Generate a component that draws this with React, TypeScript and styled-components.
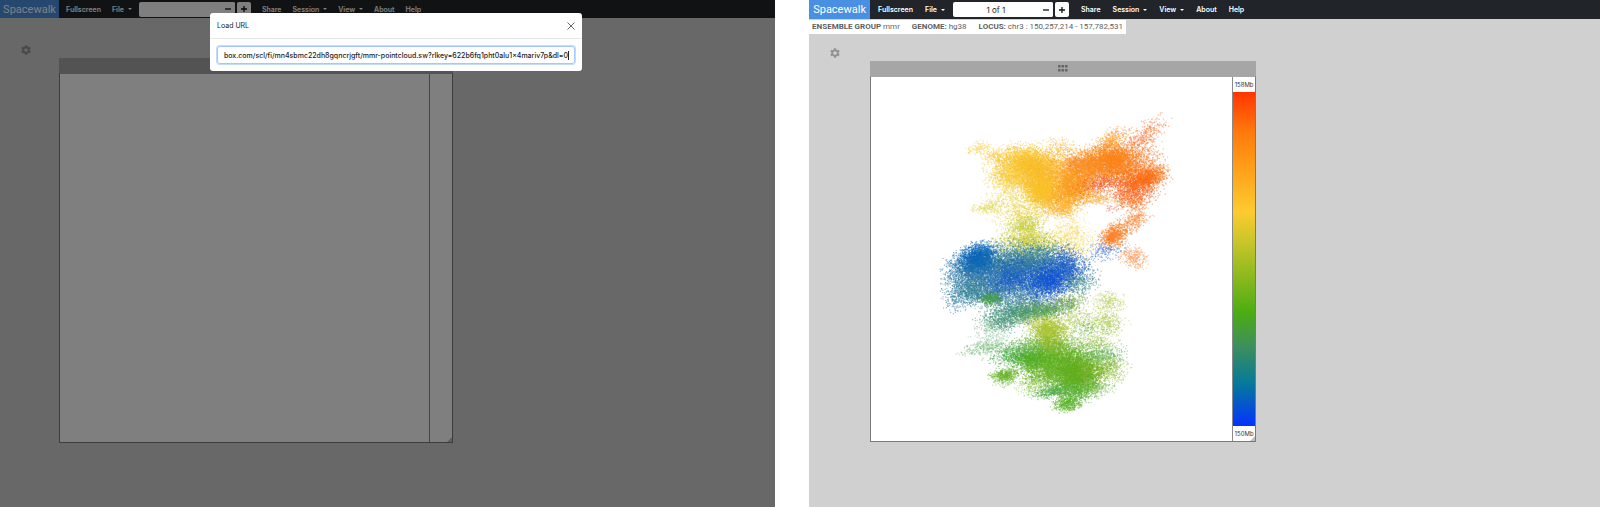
import React from 'react';
import styled, { createGlobalStyle } from 'styled-components';
import { MdSettings } from 'react-icons/md';

const GlobalStyle = createGlobalStyle`
  *, *::before, *::after { box-sizing: border-box; }
  body { margin: 0; background: #fff; font-family: Inter, sans-serif; font-size: 8px; }
  button, input { font: inherit; color: inherit; margin: 0; }
`;

const Page = styled.div`
  display: grid;
  grid-template-columns: 49fr 50fr;
  column-gap: 34px;
  min-height: 100vh;
`;

const Panel = styled.section`
  position: relative;
  min-width: 0;
  background: #d0d0d0;
`;

const Nav = styled.nav<{ $tall?: boolean }>`
  display: flex;
  align-items: center;
  gap: ${p => (p.$tall ? 12 : 11)}px;
  height: ${p => (p.$tall ? 19 : 18)}px;
  background: #212529;
  color: #fff;
  font-size: 7px;
  font-weight: 600;
`;

const Brand = styled.a<{ $tall?: boolean }>`
  display: flex;
  align-items: center;
  justify-content: center;
  align-self: stretch;
  width: ${p => (p.$tall ? 61 : 59)}px;
  margin-right: -4px;
  background: #4a90e2;
  color: #fff;
  font-family: Roboto, sans-serif;
  font-size: 11px;
  font-weight: 400;
  text-decoration: none;
`;

const NavItem = styled.button`
  display: flex;
  align-items: center;
  gap: 4px;
  padding: 0;
  border: 0;
  background: none;
  white-space: nowrap;
`;

const Caret = styled.span`
  border: 2px solid transparent;
  border-top-color: currentColor;
  border-bottom: 0;
`;

const Pager = styled.div<{ $tall?: boolean }>`
  display: flex;
  flex: none;
  gap: 2px;
  width: ${p => (p.$tall ? 116 : 112)}px;
  height: 15px;
  margin-left: -4px;
  color: #212529;
`;

const PagerField = styled.div`
  display: flex;
  flex: 1;
  min-width: 0;
  border-radius: 2px;
  background: #fff;
`;

const PagerInput = styled.input`
  flex: 1;
  min-width: 0;
  padding: 0;
  border: 0;
  background: none;
  font-size: 8px;
  font-weight: 400;
  text-align: center;
`;

const Step = styled.button`
  display: flex;
  flex: none;
  align-items: center;
  justify-content: center;
  width: 14px;
  padding: 0;
  border: 0;
  border-radius: 2px;
  background: #fff;
`;

const InfoStrip = styled.div`
  display: flex;
  gap: 12px;
  width: max-content;
  height: 14px;
  margin-top: 1px;
  padding: 0 3px;
  background: #fff;
  color: #5f5f5f;
  font-family: Roboto, sans-serif;
  font-size: 8px;
  line-height: 14px;
`;

const Stage = styled.div<{ $indent: number; $top: number }>`
  display: grid;
  grid-template-columns: ${p => p.$indent}px max-content;
  padding-top: ${p => p.$top}px;
`;

const GearButton = styled.button`
  display: flex;
  align-self: start;
  justify-self: start;
  margin: 0 0 0 20px;
  padding: 0;
  border: 0;
  background: none;
  color: #929292;
`;

const Workbench = styled.div<{ $width: number }>`
  width: ${p => p.$width}px;
  margin-top: 14px;
`;

const DragBar = styled.div`
  display: flex;
  align-items: center;
  justify-content: center;
  height: 15px;
  background: #a6a6a6;
`;

const Canvas = styled.div<{ $height: number }>`
  position: relative;
  display: flex;
  height: ${p => p.$height}px;
  border: 1px solid #7a7a7a;
  border-top-color: #a6a6a6;
  background: #fff;
`;

const Plot = styled.div`
  flex: 1;
  min-width: 0;
  svg { display: block; width: 100%; height: 100%; }
`;

const Ruler = styled.div`
  display: flex;
  flex-direction: column;
  width: 23px;
  border-left: 1px solid #8a8a8a;
  color: #333;
  font-size: 6px;
  line-height: 15px;
  text-align: center;
`;

const Ramp = styled.div`
  flex: 1;
  background: linear-gradient(
    #ff3502 0%, #ff7a0c 12%, #ff9c18 22%, #fdcb2f 36%, #c8c52a 45%,
    #4cad12 66%, #3e8f5c 76%, #067a98 87%, #0433ff 100%
  );
`;

const Grip = styled.svg`
  position: absolute;
  right: 0;
  bottom: 0;
`;

const Backdrop = styled.div`
  position: absolute;
  inset: 0;
  display: flex;
  align-items: flex-start;
  padding: 13px 0 0 210px;
  background: rgba(0, 0, 0, 0.5);
`;

const Dialog = styled.div`
  width: 372px;
  border-radius: 3px;
  background: #fff;
  color: #212529;
`;

const DialogHeader = styled.header`
  display: flex;
  align-items: center;
  justify-content: space-between;
  height: 26px;
  padding: 0 7px;
  border-bottom: 1px solid #e6e8ea;
`;

const DialogTitle = styled.label`
  font-size: 7px;
`;

const CloseButton = styled.button`
  display: flex;
  padding: 0;
  border: 0;
  background: none;
`;

const DialogBody = styled.div`
  padding: 7px;
`;

const UrlField = styled.div`
  display: flex;
  align-items: center;
  height: 18px;
  padding: 0 5px;
  border: 1px solid #a4c8fe;
  border-radius: 3px;
  box-shadow: 0 0 0 1px #c2dbfe;
`;

const UrlInput = styled.input`
  flex: 1;
  min-width: 0;
  padding: 0;
  border: 0;
  outline: 0;
  background: none;
  font-size: 7px;
  font-weight: 500;
  text-align: right;
`;

const TextCursor = styled.span`
  width: 1px;
  height: 9px;
  background: #212529;
`;

// [x, y, spreadX, spreadY, tilt in degrees, points, colour]
type Cluster = [number, number, number, number, number, number, string];

const clusters: Cluster[] = [
  [107, 71, 6, 3, -15, 120, '#f7d04a'],
  [121, 79, 6, 3, 0, 150, '#f9ce45'],
  [152, 82, 13, 7, 0, 1100, '#fcc52d'],
  [157, 92, 13, 8, 0, 2100, '#fcc42a'],
  [132, 94, 9, 9, 0, 600, '#f9d245'],
  [142, 104, 11, 7, 0, 600, '#f9d245'],
  [169, 112, 8, 7, 0, 2400, '#fbc62d'],
  [177, 94, 13, 8, 0, 1100, '#fdb125'],
  [182, 102, 16, 12, 0, 900, '#fcb828'],
  [187, 74, 9, 6, 0, 250, '#fdb830'],
  [199, 109, 10, 8, -30, 1700, '#fd9a1c'],
  [184, 124, 11, 7, 0, 900, '#fdb023'],
  [192, 132, 7, 4, 0, 250, '#fdb535'],
  [214, 90, 12, 8, -15, 1600, '#fd9020'],
  [202, 86, 5, 3, 0, 120, '#f85a2a'],
  [242, 82, 12, 7, 0, 1800, '#fe8418'],
  [251, 92, 11, 7, 0, 800, '#fe7f1c'],
  [229, 90, 14, 9, 0, 1200, '#fe8a20'],
  [239, 64, 8, 5, -30, 350, '#fd9a2a'],
  [278, 54, 10, 5, -40, 190, '#fb7a38'],
  [266, 65, 10, 7, -20, 270, '#fb7a38'],
  [272, 83, 10, 9, 0, 350, '#fd8038'],
  [274, 101, 10, 5, -20, 1200, '#fe7414'],
  [268, 105, 13, 8, -20, 600, '#fe7020'],
  [260, 111, 13, 7, 0, 700, '#fb6022'],
  [259, 124, 8, 5, 0, 400, '#fd7a28'],
  [226, 106, 12, 5, -15, 450, '#f8512a'],
  [226, 122, 9, 3, 0, 250, '#fcb045'],
  [211, 114, 9, 6, 0, 400, '#fda02c'],
  [239, 132, 3, 2, 0, 25, '#f5604a'],
  [242, 159, 7, 5, -30, 850, '#fe8226'],
  [262, 144, 8, 5, -30, 350, '#fd8a3a'],
  [261, 181, 7, 5, 20, 280, '#fd9652'],
  [114, 131, 7, 3, -10, 170, '#dcd84e'],
  [154, 131, 15, 8, 0, 600, '#edd54a'],
  [132, 124, 11, 5, 0, 150, '#eddc5c'],
  [154, 149, 8, 6, 0, 500, '#c3cc38'],
  [142, 146, 11, 8, 0, 170, '#dcd84e'],
  [156, 164, 15, 6, 0, 900, '#d4d03c'],
  [199, 147, 8, 7, 0, 150, '#f8dc6a'],
  [196, 162, 13, 7, 0, 400, '#f8d95c'],
  [205, 175, 9, 6, 0, 130, '#f8d95c'],
  [107, 182, 9, 7, -15, 2000, '#0a66bb'],
  [96, 190, 11, 8, -20, 900, '#2276b0'],
  [139, 181, 17, 8, 0, 1200, '#3a8590'],
  [169, 176, 13, 7, 0, 600, '#3f8f85'],
  [112, 201, 16, 9, 0, 1500, '#2f78a8'],
  [134, 192, 20, 8, 0, 1200, '#2c7ba6'],
  [139, 200, 12, 8, -20, 1400, '#1458d6'],
  [162, 189, 16, 8, 0, 1300, '#2a70a8'],
  [160, 210, 20, 7, 0, 1000, '#2f74a8'],
  [176, 203, 12, 8, -15, 2000, '#0e4fdc'],
  [192, 187, 10, 8, 0, 900, '#1f62cc'],
  [199, 197, 12, 8, 0, 600, '#2f72b8'],
  [207, 207, 9, 5, 0, 250, '#4a9a80'],
  [234, 174, 9, 5, 0, 180, '#3a72dc'],
  [101, 214, 13, 7, 0, 1300, '#38859a'],
  [84, 226, 6, 5, 0, 120, '#3a80b8'],
  [119, 222, 5, 3, 0, 450, '#46a040'],
  [139, 222, 16, 7, 0, 800, '#3f8aa0'],
  [142, 237, 15, 6, -10, 1200, '#43937a'],
  [169, 234, 14, 5, -8, 1100, '#55a052'],
  [197, 226, 9, 4, -10, 300, '#74ac4a'],
  [172, 226, 12, 4, 0, 150, '#6a7ce0'],
  [129, 249, 9, 4, 0, 180, '#4a9a7a'],
  [169, 244, 12, 4, 0, 200, '#d4d450'],
  [237, 226, 7, 5, 0, 300, '#bdd46a'],
  [236, 247, 8, 5, 0, 280, '#a8c848'],
  [206, 244, 13, 7, 0, 350, '#a8c848'],
  [216, 254, 8, 4, 0, 100, '#6cb850'],
  [226, 266, 10, 5, 0, 220, '#a5c850'],
  [176, 254, 9, 6, 0, 1200, '#a8c430'],
  [179, 267, 8, 6, 0, 600, '#9cc030'],
  [114, 251, 6, 3, 0, 60, '#88c088'],
  [119, 262, 9, 5, 0, 170, '#90c8a0'],
  [112, 272, 12, 3, -8, 260, '#80bf80'],
  [146, 279, 14, 6, 0, 900, '#4cae4a'],
  [162, 282, 11, 5, 0, 900, '#50b020'],
  [162, 269, 12, 5, 0, 400, '#70b850'],
  [186, 277, 16, 8, 0, 1500, '#6cb428'],
  [192, 289, 19, 9, 0, 2300, '#5cb020'],
  [202, 300, 12, 9, 0, 2300, '#60b020'],
  [214, 297, 11, 7, 0, 900, '#8ab42a'],
  [229, 279, 11, 6, 0, 500, '#6cb860'],
  [236, 291, 9, 6, 0, 450, '#98c440'],
  [172, 297, 14, 8, 0, 1000, '#74bc30'],
  [132, 299, 6, 3, -5, 450, '#68b428'],
  [134, 305, 6, 3, 0, 100, '#8cc860'],
  [181, 315, 9, 3, -8, 450, '#4cae4a'],
  [206, 313, 10, 6, 0, 700, '#55b238'],
  [226, 312, 8, 4, 0, 180, '#7cc050'],
  [196, 327, 7, 4, -10, 500, '#54b220'],
  [162, 312, 9, 5, 0, 130, '#90c850'],
  [249, 304, 3, 2, 0, 20, '#a5c850'],
];

const CHUNK = 40;

function buildCloud() {
  let seed = 20117;
  const random = () => {
    seed = (seed * 1664525 + 1013904223) % 4294967296;
    return (seed + 1) / 4294967297;
  };
  const chunks: { order: number; color: string; d: string }[] = [];
  clusters.forEach(([cx, cy, sx, sy, tilt, count, color]) => {
    const cos = Math.cos((tilt * Math.PI) / 180);
    const sin = Math.sin((tilt * Math.PI) / 180);
    for (let done = 0; done < count; done += CHUNK) {
      let d = '';
      for (let i = 0; i < Math.min(CHUNK, count - done); i += 1) {
        const r = Math.min(Math.sqrt(-2 * Math.log(random())), 1.9 + random());
        const a = random() * Math.PI * 2;
        const u = r * Math.cos(a) * sx;
        const v = r * Math.sin(a) * sy;
        const x = (cx + u * cos - v * sin).toFixed(1);
        const y = (cy + u * sin + v * cos).toFixed(1);
        d += `M${x} ${y}h1.2`;
      }
      chunks.push({ order: random(), color, d });
    }
  });
  return chunks.sort((a, b) => a.order - b.order);
}

const cloud = buildCloud();

const PointCloud = () => (
  <svg viewBox="0 0 360 365" role="img" aria-label="Point cloud">
    {cloud.map((chunk, i) => (
      <path key={i} d={chunk.d} stroke={chunk.color} strokeWidth={1.2} strokeOpacity={0.5} fill="none" />
    ))}
  </svg>
);

const Dots = () => (
  <svg width="10" height="7" viewBox="0 0 10 7" fill="#666" aria-hidden="true">
    {[0, 4].map(y => [0, 3.5, 7].map(x => <rect key={`${x}-${y}`} x={x} y={y} width="2.6" height="2.6" rx=".6" />))}
  </svg>
);

const ResizeGrip = () => (
  <Grip width="5" height="5" viewBox="0 0 5 5" aria-hidden="true">
    <path d="M0 5 5 0V5Z" fill="#bdbdbd" />
  </Grip>
);

const Menu = ({ label, dropdown }: { label: string; dropdown?: boolean }) => (
  <NavItem type="button">
    {label}
    {dropdown && <Caret />}
  </NavItem>
);

const Sign = ({ plus }: { plus?: boolean }) => (
  <svg width="8" height="8" viewBox="0 0 8 8" stroke="#111" strokeWidth="1.3" aria-hidden="true">
    <path d={plus ? 'M1 4h6M4 1v6' : 'M1 4h6'} />
  </svg>
);

const NavBar = ({ tall, trace }: { tall?: boolean; trace: string }) => (
  <Nav $tall={tall}>
    <Brand href="#" $tall={tall}>Spacewalk</Brand>
    <Menu label="Fullscreen" />
    <Menu label="File" dropdown />
    <Pager $tall={tall}>
      <PagerField>
        <PagerInput aria-label="Trace" defaultValue={trace} />
        <Step type="button" aria-label="Previous"><Sign /></Step>
      </PagerField>
      <Step type="button" aria-label="Next"><Sign plus /></Step>
    </Pager>
    <Menu label="Share" />
    <Menu label="Session" dropdown />
    <Menu label="View" dropdown />
    <Menu label="About" />
    <Menu label="Help" />
  </Nav>
);

export default function App() {
  return (
    <>
      <GlobalStyle />
      <Page>
        <Panel>
          <NavBar trace="" />
          <Stage $indent={59} $top={26}>
            <GearButton type="button" aria-label="Settings"><MdSettings size={12} /></GearButton>
            <Workbench $width={394}>
              <DragBar />
              <Canvas $height={370}>
                <Plot />
                <Ruler />
                <ResizeGrip />
              </Canvas>
            </Workbench>
          </Stage>
          <Backdrop>
            <Dialog role="dialog" aria-label="Load URL">
              <DialogHeader>
                <DialogTitle htmlFor="load-url">Load URL</DialogTitle>
                <CloseButton type="button" aria-label="Close">
                  <svg width="8" height="8" viewBox="0 0 8 8" stroke="#666" strokeWidth="1" aria-hidden="true">
                    <path d="M.5.5l7 7M7.5.5l-7 7" />
                  </svg>
                </CloseButton>
              </DialogHeader>
              <DialogBody>
                <UrlField>
                  <UrlInput
                    id="load-url"
                    defaultValue="box.com/scl/fi/mn4sbmc22dh8gqncrjgft/mmr-pointcloud.sw?rlkey=622b6fq1pht0alu1x4mariv7p&dl=0"
                  />
                  <TextCursor />
                </UrlField>
              </DialogBody>
            </Dialog>
          </Backdrop>
        </Panel>
        <Panel>
          <NavBar tall trace="1 of 1" />
          <InfoStrip>
            <span><b>ENSEMBLE GROUP</b> mmr</span>
            <span><b>GENOME:</b> hg38</span>
            <span><b>LOCUS:</b> chr3 : 150,257,214 - 157,782,531</span>
          </InfoStrip>
          <Stage $indent={61} $top={13}>
            <GearButton type="button" aria-label="Settings"><MdSettings size={12} /></GearButton>
            <Workbench $width={386}>
              <DragBar><Dots /></DragBar>
              <Canvas $height={366}>
                <Plot><PointCloud /></Plot>
                <Ruler>
                  <span>158Mb</span>
                  <Ramp />
                  <span>150Mb</span>
                </Ruler>
                <ResizeGrip />
              </Canvas>
            </Workbench>
          </Stage>
        </Panel>
      </Page>
    </>
  );
}
